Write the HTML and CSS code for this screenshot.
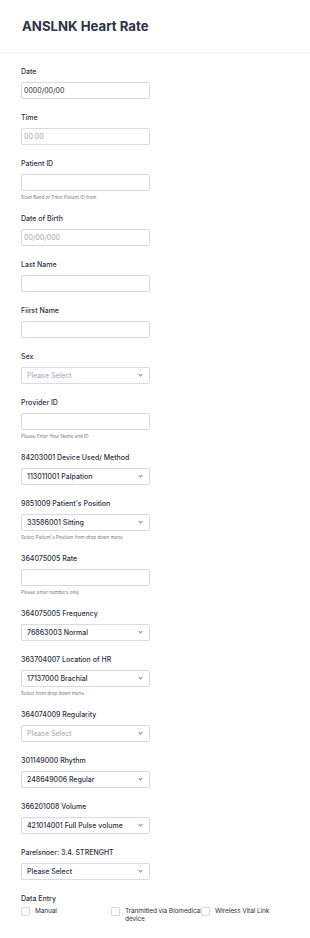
FILE: index.html
```html
<!DOCTYPE html>
<html lang="en">
  <head>
    <meta charset="UTF-8" />
    <meta name="viewport" content="width=device-width, initial-scale=1.0" />
    <title>ANSLNK Heart Rate</title>
    <link rel="stylesheet" href="styles.css">
  </head>
  <body>
    <header class="header">
      <h1 class="title">ANSLNK Heart Rate</h1>
    </header>

    <form class="form">
      <div class="field">
        <label class="label">Date</label>
        <div class="box">0000/00/00</div>
      </div>

      <div class="field">
        <label class="label">Time</label>
        <div class="box placeholder">00:00</div>
      </div>

      <div class="field">
        <label class="label">Patient ID</label>
        <div class="box"></div>
        <p class="sub">Scan Band or Enter Patient ID from</p>
      </div>

      <div class="field">
        <label class="label">Date of Birth</label>
        <div class="box placeholder">00/00/000</div>
      </div>

      <div class="field">
        <label class="label">Last Name</label>
        <div class="box"></div>
      </div>

      <div class="field">
        <label class="label">Fiirst Name</label>
        <div class="box"></div>
      </div>

      <div class="field">
        <label class="label">Sex</label>
        <div class="box select placeholder">Please Select</div>
      </div>

      <div class="field">
        <label class="label">Provider ID</label>
        <div class="box"></div>
        <p class="sub">Please Enter Your Name and ID</p>
      </div>

      <div class="field">
        <label class="label">84203001 Device Used/ Method</label>
        <div class="box select">113011001 Palpation</div>
      </div>

      <div class="field">
        <label class="label">9851009 Patient's Position</label>
        <div class="box select">33586001 Sitting</div>
        <p class="sub">Select Patient's Position from drop down menu</p>
      </div>

      <div class="field">
        <label class="label">364075005 Rate</label>
        <div class="box"></div>
        <p class="sub">Please enter numbers only.</p>
      </div>

      <div class="field">
        <label class="label">364075005 Frequency</label>
        <div class="box select">76863003 Normal</div>
      </div>

      <div class="field">
        <label class="label">363704007 Location of HR</label>
        <div class="box select">17137000 Brachial</div>
        <p class="sub">Select from drop down menu</p>
      </div>

      <div class="field">
        <label class="label">364074009 Regularity</label>
        <div class="box select placeholder">Please Select</div>
      </div>

      <div class="field">
        <label class="label">301149000 Rhythm</label>
        <div class="box select">248649006 Regular</div>
      </div>

      <div class="field">
        <label class="label">366201008 Volume</label>
        <div class="box select">421014001 Full Pulse volume</div>
      </div>

      <div class="field">
        <label class="label">Parelsnoer: 3.4. STRENGHT</label>
        <div class="box select">Please Select</div>
      </div>

      <div class="field">
        <label class="label">Data Entry</label>
        <div class="checks">
          <div class="check"><span class="tick"></span><span>Manual</span></div>
          <div class="check"><span class="tick"></span><span>Tranmitted via Biomedical<br>device</span></div>
          <div class="check"><span class="tick"></span><span>Wireless Vital Link</span></div>
        </div>
      </div>
    </form>
  </body>
</html>
```

FILE: styles.css
```css
/*
  Global styles
*/

:root {
  --text: #2c3345;
  --border: #d8dae2;
  --muted: #a0a6b6;
  --sub: #6f7a92;
}
* {
  margin: 0;
  padding: 0;
  box-sizing: border-box;
  font-family: "Inter", "Noto Sans", sans-serif;
}
body {
  background-color: #fff;
  color: var(--text);
}

/*
  Header
*/

.header {
  height: 53px;
  padding: 20px 22px 0;
  border-bottom: 1px solid #eeeff3;
}
.title {
  font-size: 13.2px;
  font-weight: 700;
  line-height: 12px;
}

/*
  Form fields
*/

.form {
  padding: 14px 21px 0;
}
.field {
  padding-bottom: 14px;
}
.label {
  display: block;
  height: 10px;
  margin-bottom: 5px;
  font-size: 7px;
  font-weight: 500;
  line-height: 10px;
}
.box {
  position: relative;
  width: 129px;
  height: 17px;
  padding-left: 2px;
  border: 1px solid var(--border);
  border-radius: 2px;
  font-size: 7px;
  line-height: 15px;
}
.box.select {
  padding-left: 5px;
  font-weight: 500;
}
.box.select::after {
  content: "";
  position: absolute;
  right: 7px;
  top: 5px;
  width: 2px;
  height: 2px;
  border-right: 1px solid #7d8597;
  border-bottom: 1px solid #7d8597;
  transform: rotate(45deg);
}
.box.placeholder {
  color: var(--muted);
  font-weight: 400;
}
.sub {
  margin-top: 4px;
  height: 5px;
  font-size: 4.6px;
  line-height: 5px;
  color: var(--sub);
}

/*
  Checkboxes
*/

.checks {
  display: flex;
  margin-top: -2px;
}
.check {
  display: flex;
  flex: none;
  width: 90px;
  gap: 4px;
  font-size: 6.5px;
  line-height: 8px;
  letter-spacing: -0.1px;
  white-space: nowrap;
}
.tick {
  flex: none;
  width: 9px;
  height: 9px;
  margin-right: 1px;
  border: 1px solid var(--border);
  border-radius: 1px;
}
```
